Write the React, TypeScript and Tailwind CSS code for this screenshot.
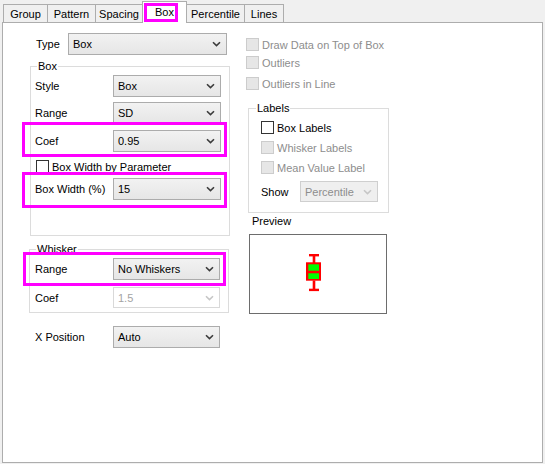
import React from 'react';

type SelectProps = {
  value: string;
  className: string;
  disabled?: boolean;
  grayed?: boolean;
};

const Chevron = ({ light }: { light?: boolean }) => (
  <svg width="9" height="6" viewBox="0 0 9 6" className="shrink-0">
    <path d="M1 1.2 L4.5 4.6 L8 1.2" fill="none" stroke={light ? '#c6c6c6' : '#3c3c3c'} strokeWidth="1.6" />
  </svg>
);

// combo box, three looks: normal, disabled on white, disabled on gray
function Select({ value, className, disabled, grayed }: SelectProps) {
  const look = grayed
    ? 'border-[#cfcfcf] bg-[#efefef] text-[#8d8d8d]'
    : disabled
      ? 'border-[#d9d9d9] bg-white text-[#a3a3a3]'
      : 'border-[#acacac] bg-gradient-to-b from-[#f2f2f2] to-[#e6e6e6] text-black';
  return (
    <div className={`flex items-center justify-between border pl-[4px] pr-[5px] ${look} ${className}`}>
      <span>{value}</span>
      <Chevron light={disabled || grayed} />
    </div>
  );
}

function Check({ label, disabled, className = '' }: { label: string; disabled?: boolean; className?: string }) {
  return (
    <div className={`flex h-[13px] items-center ${className}`}>
      <span
        className={`h-[13px] w-[13px] shrink-0 border ${
          disabled ? 'border-[#cccccc] bg-[#e6e6e6]' : 'border-[#333333] bg-white'
        }`}
      />
      <span className={`ml-[3px] whitespace-nowrap ${disabled ? 'text-[#8d8d8d]' : 'text-black'}`}>{label}</span>
    </div>
  );
}

const Mark = ({ className }: { className: string }) => (
  <div className={`pointer-events-none absolute z-20 border-[3px] border-[#ff00ff] ${className}`} />
);

const tabs = [
  { name: 'Group', w: 'w-[45px]' },
  { name: 'Pattern', w: 'w-[49px]' },
  { name: 'Spacing', w: 'w-[48px]' },
  { name: 'Box', w: 'w-[45px]', active: true },
  { name: 'Percentile', w: 'w-[59px]' },
  { name: 'Lines', w: 'w-[40px]' },
];

export default function App() {
  return (
    <div className="h-[464px] w-[545px] bg-[#f0f0f0] text-[11px] leading-[14px] text-black [font-family:'Liberation_Sans',Arial,sans-serif]">
      <div className="relative z-10 flex h-[22px] items-end pl-[3px]">
        {tabs.map((t, i) =>
          t.active ? (
            <div
              key={t.name}
              className={`relative -mb-px flex h-[22px] items-center justify-center border-x border-t border-[#adadad] bg-white pb-[1px] ${t.w} ${i ? '-ml-px' : ''}`}
            >
              {t.name}
              <Mark className="left-[1px] top-[1px] h-[19px] w-[34px]" />
            </div>
          ) : (
            <div
              key={t.name}
              className={`flex h-[18px] items-center justify-center border-x border-t border-[#adadad] bg-[#f0f0f0] ${t.w} ${i ? '-ml-px' : ''}`}
            >
              {t.name}
            </div>
          )
        )}
      </div>

      <div className="ml-[2px] flex h-[441px] w-[541px] border border-[#adadad] bg-white">
        {/* left column */}
        <div className="ml-[26px] w-[201px] pt-[10px]">
          <div className="flex h-[22px] items-center">
            <span className="w-[39px] pl-[7px]">Type</span>
            <Select value="Box" className="h-[22px] w-[159px]" />
          </div>

          <div className="relative ml-[1px] mt-[11px] h-[170px] w-[200px] border border-[#dcdcdc] pt-[8px]">
            <span className="absolute -top-[8px] left-[6px] bg-white px-[1px]">Box</span>
            <div className="flex h-[22px] items-center">
              <span className="w-[82px] pl-[4px]">Style</span>
              <Select value="Box" className="h-[22px] w-[108px]" />
            </div>
            <div className="mt-[5px] flex h-[22px] items-center">
              <span className="w-[82px] pl-[4px]">Range</span>
              <Select value="SD" className="h-[22px] w-[108px]" />
            </div>
            <div className="relative mt-[6px] flex h-[22px] items-center">
              <span className="w-[82px] pl-[4px]">Coef</span>
              <Select value="0.95" className="h-[22px] w-[108px]" />
              <Mark className="-bottom-[5px] -left-[9px] -top-[8px] right-[2px]" />
            </div>
            <Check label="Box Width by Parameter" className="mt-[8px] pl-[5px]" />
            <div className="relative mt-[5px] flex h-[22px] items-center">
              <span className="w-[82px] pl-[4px]">Box Width (%)</span>
              <Select value="15" className="h-[22px] w-[108px]" />
              <Mark className="-bottom-[8px] -left-[9px] -top-[6px] right-[2px]" />
            </div>
          </div>

          <div className="relative mt-[13px] h-[64px] w-[200px] border border-[#dcdcdc] pt-[8px]">
            <span className="absolute -top-[8px] left-[6px] bg-white px-[1px]">Whisker</span>
            <div className="relative flex h-[22px] items-center">
              <span className="w-[83px] pl-[5px]">Range</span>
              <Select value="No Whiskers" className="h-[22px] w-[107px]" />
              <Mark className="-bottom-[6px] -left-[7px] -top-[6px] right-[2px]" />
            </div>
            <div className="mt-[7px] flex h-[21px] items-center">
              <span className="w-[83px] pl-[5px]">Coef</span>
              <Select value="1.5" className="h-[21px] w-[107px]" disabled />
            </div>
          </div>

          <div className="mt-[13px] flex h-[22px] items-center">
            <span className="w-[84px] pl-[6px]">X Position</span>
            <Select value="Auto" className="h-[22px] w-[107px]" />
          </div>
        </div>

        {/* right column */}
        <div className="ml-[16px] w-[145px] pt-[15px]">
          <Check label="Draw Data on Top of Box" disabled />
          <Check label="Outliers" disabled className="mt-[5px]" />
          <Check label="Outliers in Line" disabled className="mt-[8px]" />

          <div className="relative ml-[2px] mt-[18px] h-[105px] w-[141px] border border-[#dcdcdc] pl-[12px] pt-[12px]">
            <span className="absolute -top-[8px] left-[7px] bg-white px-[1px]">Labels</span>
            <Check label="Box Labels" />
            <Check label="Whisker Labels" disabled className="mt-[7px]" />
            <Check label="Mean Value Label" disabled className="mt-[7px]" />
            <div className="mt-[7px] flex h-[21px] items-center">
              <span className="w-[39px]">Show</span>
              <Select value="Percentile" className="h-[21px] w-[78px]" grayed />
            </div>
          </div>

          <div className="ml-[6px] h-[21px] pt-[1px]">Preview</div>
          <div className="ml-[3px] h-[80px] w-[138px] border border-[#6d6d6d] bg-white">
            <svg width="136" height="78" viewBox="0 0 136 78">
              <rect x="59" y="19" width="10" height="2.4" fill="#ff0000" />
              <rect x="62.7" y="21" width="2.6" height="7" fill="#ff0000" />
              <rect x="56" y="27.3" width="15" height="18.4" fill="#ff0000" />
              <rect x="58.3" y="29.3" width="10.7" height="6.4" fill="#00ff00" />
              <rect x="58.3" y="38.3" width="10.7" height="5.7" fill="#00ff00" />
              <rect x="62.7" y="45.5" width="2.6" height="8.5" fill="#ff0000" />
              <rect x="59" y="53.7" width="10" height="2.4" fill="#ff0000" />
            </svg>
          </div>
        </div>
      </div>
    </div>
  );
}
